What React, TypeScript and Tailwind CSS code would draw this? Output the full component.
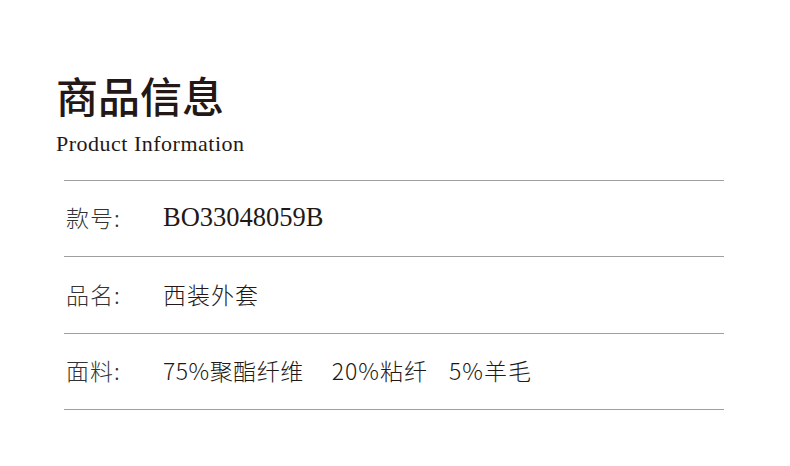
import React from 'react';

const cjk = "font-['Noto_Sans_CJK_SC',sans-serif]";

const Row: React.FC<{ label: string; tall?: boolean; children: React.ReactNode }> = ({ label, tall, children }) => (
  <div className={`flex items-center border-b border-[#9f9f9f] pl-[2px] pb-[2px] ${tall ? 'h-[77px]' : 'h-[76px]'}`}>
    <div className={`${cjk} w-[97px] shrink-0 text-[23px] font-light tracking-[1px] text-[#333333]`}>{label}</div>
    <div className="flex items-center text-[#231815]">{children}</div>
  </div>
);

const App: React.FC = () => {
  return (
    <div className="h-[466px] w-[790px] bg-white pl-[56px] pt-[74px]">
      <h1 className={`${cjk} text-[42px] font-medium leading-none text-[#231815]`}>商品信息</h1>
      <p className="mt-[17px] font-['Liberation_Serif',serif] text-[22px] leading-none tracking-[0.5px] text-[#231815]">
        Product Information
      </p>

      <div className="mt-[25px] ml-[8px] w-[660px] border-t border-[#9f9f9f]">
        <Row label="款号:">
          <span className="font-['Liberation_Serif',serif] text-[26.5px]">BO33048059B</span>
        </Row>
        <Row label="品名:" tall>
          <span className={`${cjk} text-[23px] font-light tracking-[1px]`}>西装外套</span>
        </Row>
        <Row label="面料:">
          <span className={`${cjk} text-[23px] font-light tracking-[0.5px]`}>75%聚酯纤维</span>
          <span className={`${cjk} ml-[28px] text-[23px] font-light tracking-[1px]`}>20%粘纤</span>
          <span className={`${cjk} ml-[21px] text-[23px] font-light tracking-[1px]`}>5%羊毛</span>
        </Row>
      </div>
    </div>
  );
};

export default App;
